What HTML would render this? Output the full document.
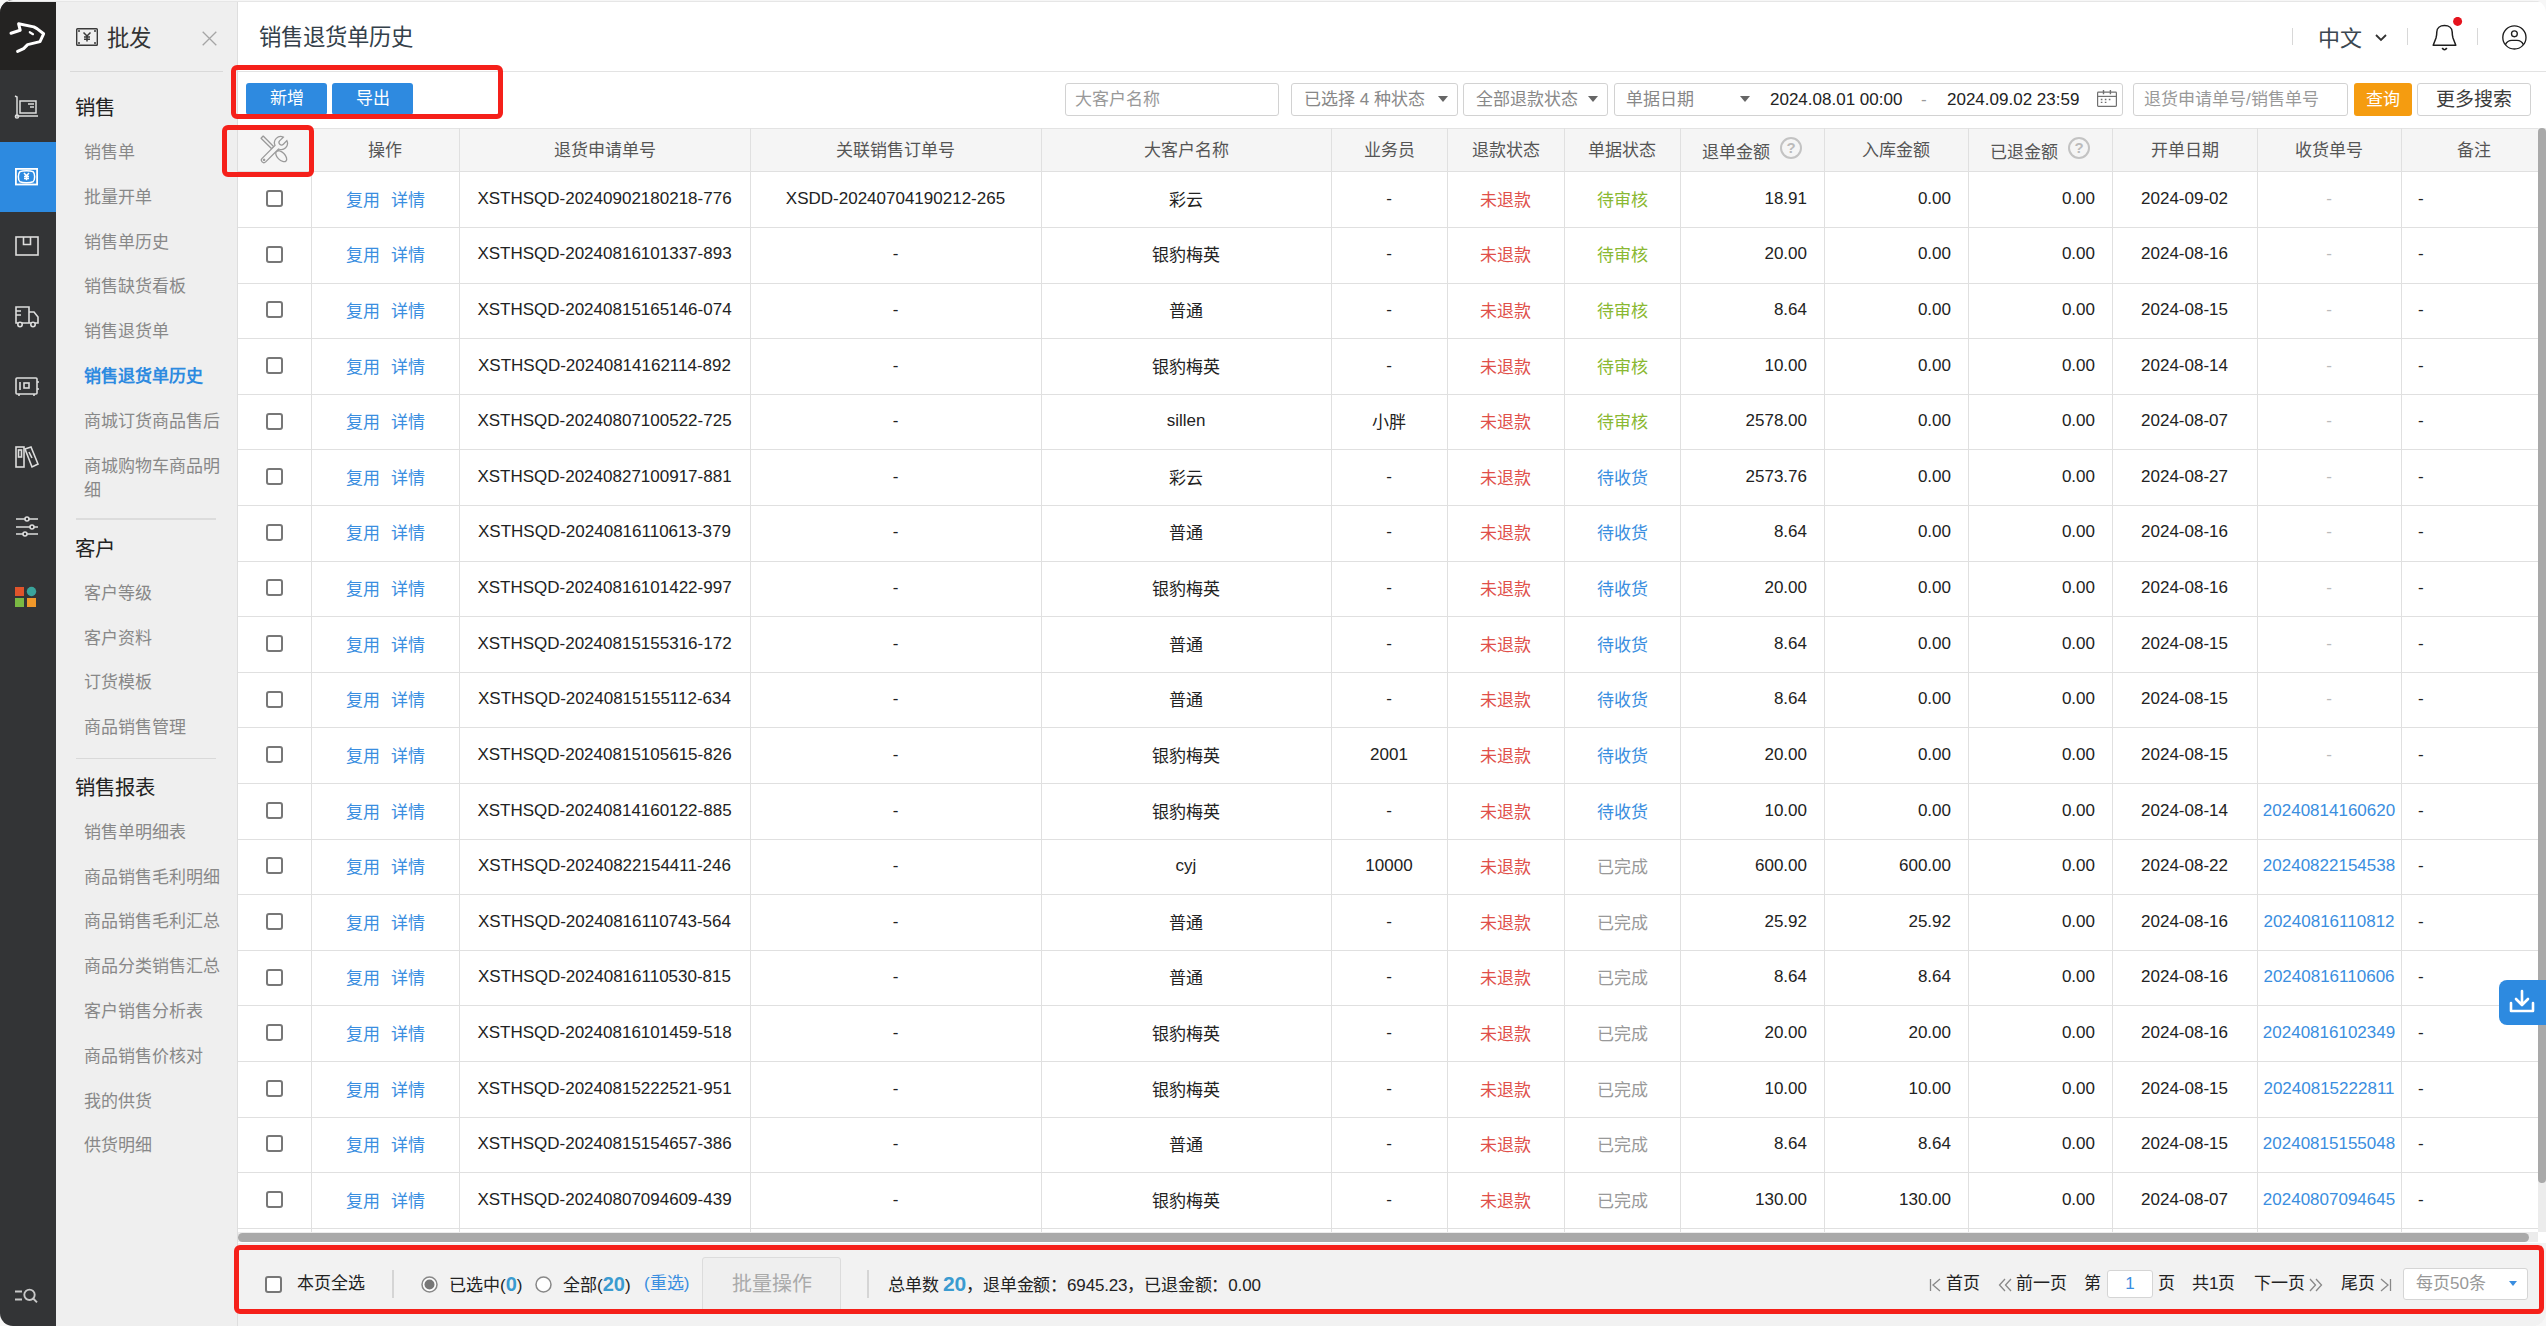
<!DOCTYPE html><html lang="zh-CN"><head><meta charset="utf-8"><style>
*{margin:0;padding:0;box-sizing:border-box}
html,body{width:2546px;height:1326px;overflow:hidden;background:#f7f7f7;font-family:"Liberation Sans",sans-serif}
#win{position:absolute;left:0;top:0;width:2546px;height:1326px;border-radius:13px;overflow:hidden;background:#fff}
#topln{position:absolute;left:0;top:0;width:2546px;height:2px;background:linear-gradient(#f6f6f6 0,#f6f6f6 1px,#e6e6e6 1px)}
#rtln{position:absolute;left:2545px;top:0;width:1px;height:120px;background:#ececec}
.abs{position:absolute}
/* rail */
#rail{position:absolute;left:0;top:0;width:56px;height:1326px;background:#333436}
#logo{position:absolute;left:0;top:0;width:56px;height:70px;background:#242322}
#act{position:absolute;left:0;top:142px;width:56px;height:70px;background:#2d8ae0}
.ri{position:absolute;left:0;width:56px;display:flex;justify-content:flex-start;padding-left:14px}
/* sidebar */
#side{position:absolute;left:56px;top:0;width:181px;height:1326px;background:#efefef;color:#888}
#side .hd{position:absolute;left:20px;top:22px;font-size:22px;color:#333;line-height:30px}
#side .x{position:absolute;left:145.5px;top:30.5px}
#side .div{position:absolute;left:14px;width:153px;height:1px;background:#d9d9d9}
#side .grp{position:absolute;left:19px;font-size:20.4px;color:#222;line-height:26px}
#side .it{position:absolute;left:28px;width:140px;font-size:17px;line-height:24px;color:#888}
#side .it.on{color:#2d8ae0;font-weight:bold}
/* main */
#main{position:absolute;left:237px;top:0;width:2309px;height:1326px;border-left:1px solid #dedede}
#title{position:absolute;left:259px;top:21.5px;font-size:22.4px;color:#34404a;line-height:32px}
#hline{position:absolute;left:238px;top:71px;width:2308px;height:1px;background:#e3e3e3}
.btn{position:absolute;top:83px;height:32px;width:81px;background:#2e8ae0;color:#fff;font-size:17px;line-height:32px;text-align:center;border-radius:3px}
.inp{position:absolute;top:83px;height:33px;border:1px solid #d2d2d2;border-radius:3px;background:#fff;font-size:17px;line-height:31px;color:#999;white-space:nowrap}
.tri{position:absolute;width:0;height:0;border-left:5px solid transparent;border-right:5px solid transparent;border-top:6px solid #666}
/* table */
#tbl{position:absolute;left:0;top:0}
.thead{position:absolute;left:238px;top:128px;width:2300px;height:44px;background:#f5f5f5;border-top:1px solid #e3e3e3}
.vl{position:absolute;top:128px;width:1px;height:1104px;background:#e0e0e0}
.hl{position:absolute;left:238px;width:2300px;height:1px;background:#e0e0e0}
.th{position:absolute;top:128px;height:44px;line-height:46px;text-align:center;font-size:17px;color:#555;white-space:nowrap}
.th.q{line-height:50px}
.th.q .qm{margin-top:8.5px}
.qm{display:inline-block;width:22px;height:22px;border:2px solid #c3c3c3;border-radius:50%;vertical-align:top;margin-top:8px;margin-left:10px;position:relative}
.qm:after{content:"?";position:absolute;left:0;top:0;width:18px;text-align:center;font-size:15px;line-height:18px;color:#bbb;font-weight:bold}
.td{position:absolute;height:55.55px;line-height:57px;text-align:center;font-size:17px;color:#222;white-space:nowrap}
.td.la{line-height:53px}
.td.rt{text-align:right;padding-right:17px}
.td.lt{text-align:left;padding-left:17px}
.td.red{color:#e0504a}
.td.grn{color:#8ab832}
.td.blu{color:#3a8ee0}
.td.gry{color:#999}
.td.dash{color:#bbb}
.lk{color:#3a8ee0}
.l2{margin-left:11px}
.cb{position:absolute;left:266px;width:17px;height:17px;border:2px solid #777;border-radius:3px;background:#fff}
#vsb{position:absolute;left:2538px;top:128px;width:8px;height:1104px;background:#ececec}
#vthumb{position:absolute;left:2538px;top:128px;width:8px;height:1055px;background:#a9a9a9;border-radius:4px}
#hsb{position:absolute;left:238px;top:1232px;width:2300px;height:10px;background:#ececec}
#hthumb{position:absolute;left:238px;top:1233px;width:2291px;height:9px;background:#a9a9a9;border-radius:5px}
/* footer */
#foot{position:absolute;left:238px;top:1243px;width:2308px;height:83px;background:#f2f2f2;font-size:17px;color:#222;white-space:nowrap}
.f{position:absolute;line-height:24px}
.red-box{position:absolute;border:5px solid #f5201a;border-radius:6px}

</style></head><body><div id="win">
<div id="rail">
 <div id="logo">
  <svg class="abs" style="left:0;top:0" width="56" height="70" viewBox="0 0 56 70" fill="none" stroke="#fff" stroke-width="3" stroke-linejoin="round" stroke-linecap="round"><path d="M11 33.2 L20.2 30.2 L18.6 23.8 L33.8 26.9 L37 28.6 L43.6 33.8 L40 41.6 L27.6 44.6 L23.6 48.6 L17.6 51.4"/><path d="M29.8 32.2 L33 34.2" stroke-width="2.2"/></svg>
 </div>
 <div id="act"></div>
 <div class="ri" style="top:95px"><svg style="margin-left:-1px" width="26" height="24" viewBox="0 0 26 24" fill="none" stroke="#ddd" stroke-width="1.5"><path d="M2 1 L4 2 L4 21 L25 21"/><rect x="7" y="6" width="16" height="12"/><path d="M15 9 H21 M17 12 H21"/><circle cx="4" cy="21.5" r="1.6"/></svg></div>
 <div class="ri" style="top:168.3px"><svg style="margin-left:1px" width="24" height="18" viewBox="0 0 24 18" fill="none" stroke="#fff" stroke-width="1.8"><rect x="0.9" y="0.9" width="21.2" height="15.6"/><path d="M5 3.6 C8 2.4 15 2.4 18 3.6 C20.2 5.5 20.2 11.9 18 13.8 C15 15 8 15 5 13.8 C2.8 11.9 2.8 5.5 5 3.6 Z" stroke-width="1.5"/><path d="M9 5 L11.5 7.8 L14 5 M11.5 7.8 V12.2 M9 8.6 H14 M9 10.5 H14" stroke-width="1.5"/></svg></div>
 <div class="ri" style="top:235px"><svg width="26" height="22" viewBox="0 0 26 22" fill="none" stroke="#ddd" stroke-width="1.6"><rect x="2" y="2" width="22" height="18"/><path d="M9.5 2 V9.5 H16.5 V2"/></svg></div>
 <div class="ri" style="top:305px"><svg width="26" height="24" viewBox="0 0 26 24" fill="none" stroke="#ddd" stroke-width="1.6"><path d="M2 2 H15 V18 H2 Z M15 7 H20 L24 12 V18 H15"/><path d="M2 6 H7 M2 10 H7"/><circle cx="6" cy="19.5" r="2.2" fill="#333436"/><circle cx="19" cy="19.5" r="2.2" fill="#333436"/></svg></div>
 <div class="ri" style="top:376px"><svg width="26" height="22" viewBox="0 0 26 22" fill="none" stroke="#ddd" stroke-width="1.6"><rect x="2" y="2" width="21" height="16" rx="1"/><path d="M6 6 V14"/><rect x="10" y="7" width="5" height="5"/><path d="M23 6 H25 M23 13 H25 M5 18 V20 M20 18 V20"/></svg></div>
 <div class="ri" style="top:445px"><svg width="26" height="24" viewBox="0 0 26 24" fill="none" stroke="#ddd" stroke-width="1.6"><rect x="2" y="2" width="8" height="20"/><rect x="4.5" y="5" width="3" height="7"/><path d="M11 4 L17 2 L24 19 L18 22 Z"/><path d="M15 7 L18 13"/></svg></div>
 <div class="ri" style="top:515px"><svg width="26" height="22" viewBox="0 0 26 22" fill="none" stroke="#ddd" stroke-width="1.6"><path d="M2 4 H24 M2 12 H24 M2 19 H24"/><circle cx="13" cy="4" r="2" fill="#333436"/><circle cx="18" cy="12" r="2" fill="#333436"/><circle cx="11" cy="19" r="2" fill="#333436"/></svg></div>
 <div class="ri" style="top:586px"><svg width="24" height="22" viewBox="0 0 24 22"><rect x="1" y="1" width="9" height="9" fill="#e0542b"/><circle cx="17.5" cy="5.5" r="4.7" fill="#3aa49b"/><rect x="1" y="12" width="9" height="9" fill="#7ab943"/><rect x="13" y="12" width="9" height="9" fill="#f0982a"/></svg></div>
 <div class="ri" style="top:1287px"><svg width="26" height="20" viewBox="0 0 26 20" fill="none" stroke="#c8c8c8" stroke-width="1.9"><path d="M1 4.5 H8 M1 12.5 H8"/><circle cx="15.5" cy="7.8" r="5.2"/><path d="M19.2 11.5 L23 15.3"/></svg></div>
</div>
<div id="side">
 <svg class="abs" style="left:20px;top:27.5px" width="22" height="18" viewBox="0 0 22 18" fill="none" stroke="#3a3a3a" stroke-width="1.4"><rect x="0.7" y="0.7" width="20.6" height="16.6" rx="0.8"/><path d="M7.5 4.5 L11 8 L14.5 4.5 M11 8 V13.5 M8 9 H14 M8 11.2 H14" stroke-width="1.5"/><circle cx="3" cy="3" r="1" fill="#3a3a3a" stroke="none"/><circle cx="19" cy="3" r="1" fill="#3a3a3a" stroke="none"/><circle cx="3" cy="15" r="1" fill="#3a3a3a" stroke="none"/><circle cx="19" cy="15" r="1" fill="#3a3a3a" stroke="none"/></svg>
 <div class="hd" style="left:50.5px;top:23.5px;font-size:22.4px">批发</div>
 <svg class="x" width="15" height="15" viewBox="0 0 15 15" stroke="#a5a5a5" stroke-width="1.3"><path d="M0.7 0.7 L14.3 14.3 M14.3 0.7 L0.7 14.3"/></svg>
 <div class="div" style="top:71px"></div>
 <div class="grp" style="top:95px">销售</div>
 <div class="it" style="top:141px">销售单</div>
 <div class="it" style="top:186px">批量开单</div>
 <div class="it" style="top:231px">销售单历史</div>
 <div class="it" style="top:275px">销售缺货看板</div>
 <div class="it" style="top:320px">销售退货单</div>
 <div class="it on" style="top:365px">销售退货单历史</div>
 <div class="it" style="top:410px">商城订货商品售后</div>
 <div class="it" style="top:455px">商城购物车商品明细</div>
 <div class="div" style="top:518px;left:20px;width:140px;height:2px;background:#dcdcdc"></div>
 <div class="grp" style="top:536px">客户</div>
 <div class="it" style="top:582px">客户等级</div>
 <div class="it" style="top:627px">客户资料</div>
 <div class="it" style="top:671px">订货模板</div>
 <div class="it" style="top:716px">商品销售管理</div>
 <div class="div" style="top:758px;left:20px;width:140px"></div>
 <div class="grp" style="top:775px">销售报表</div>
 <div class="it" style="top:821px">销售单明细表</div>
 <div class="it" style="top:866px">商品销售毛利明细</div>
 <div class="it" style="top:910px">商品销售毛利汇总</div>
 <div class="it" style="top:955px">商品分类销售汇总</div>
 <div class="it" style="top:1000px">客户销售分析表</div>
 <div class="it" style="top:1045px">商品销售价核对</div>
 <div class="it" style="top:1090px">我的供货</div>
 <div class="it" style="top:1134px">供货明细</div>
</div>
<div id="main"></div>
<div id="title">销售退货单历史</div>
<div id="hline"></div>
<!-- header right -->
<div class="abs" style="left:2292px;top:28px;width:1px;height:17px;background:#d8d8d8"></div>
<div class="abs" style="left:2318px;top:23.5px;font-size:22px;color:#3b4650;line-height:30px">中文</div>
<svg class="abs" style="left:2375px;top:34px" width="12" height="8" viewBox="0 0 12 8" fill="none" stroke="#333" stroke-width="1.8"><path d="M1 1 L6 6 L11 1"/></svg>
<div class="abs" style="left:2407px;top:28px;width:1px;height:17px;background:#d8d8d8"></div>
<svg class="abs" style="left:2430px;top:17px" width="36" height="36" viewBox="0 0 36 36" fill="none" stroke="#1e1e1e" stroke-width="1.5" stroke-linejoin="round"><path d="M3.2 28.2 H25.8 L23 21 C22.4 19 22.2 17 22.2 15 C22.2 11 19 8.6 14.5 8.6 C10 8.6 6.8 11 6.8 15 C6.8 17 6.6 19 6 21 Z"/><path d="M12.2 31 Q14.5 34.5 16.8 31" stroke-width="1.7"/><circle cx="27.6" cy="4.4" r="4.5" fill="#e5131d" stroke="none"/></svg>
<div class="abs" style="left:2477px;top:28px;width:1px;height:17px;background:#d8d8d8"></div>
<svg class="abs" style="left:2500px;top:23px" width="29" height="29" viewBox="0 0 29 29" fill="none" stroke="#1e1e1e" stroke-width="1.35"><circle cx="14.4" cy="14.4" r="11.6"/><circle cx="14.4" cy="10.8" r="2.9"/><path d="M5.4 21.6 C6.8 18.6 9.2 17.4 11.8 17.4 H17 C19.6 17.4 22 18.6 23.4 21.6"/></svg>
<!-- toolbar -->
<div class="btn" style="left:246px">新增</div>
<div class="btn" style="left:332px">导出</div>
<div class="inp" style="left:1065px;width:214px;padding-left:9px">大客户名称</div>
<div class="inp" style="left:1291px;width:167px;padding-left:12px;color:#888">已选择 4 种状态<i class="tri" style="left:146px;top:12px"></i></div>
<div class="inp" style="left:1463px;width:145px;padding-left:12px;color:#888">全部退款状态<i class="tri" style="left:124px;top:12px"></i></div>
<div class="inp" style="left:1614px;width:509px;padding-left:11px;color:#888">单据日期<i class="tri" style="left:125px;top:12px"></i><span class="abs" style="left:155px;color:#222">2024.08.01 00:00</span><span class="abs" style="left:306px;color:#999">-</span><span class="abs" style="left:332px;color:#222">2024.09.02 23:59</span>
 <svg class="abs" style="left:481px;top:5px" width="22" height="20" viewBox="0 0 22 20" fill="none" stroke="#707070" stroke-width="1.2"><rect x="1.6" y="3.1" width="18.8" height="14.3" rx="0.8"/><path d="M1.6 7.4 H20.4"/><path d="M7.5 1 V5.2 M14.4 1 V5.2" stroke-width="1.4"/><path d="M4.8 10.5 H6.4 M8.8 10.5 H10.4 M12.8 10.5 H14.4 M4.8 13.3 H6.4 M8.8 13.3 H10.4" stroke-width="1.3"/></svg></div>
<div class="inp" style="left:2133px;width:215px;padding-left:10px">退货申请单号/销售单号</div>
<div class="abs" style="left:2354px;top:83px;width:58px;height:33px;background:#f59c10;border-radius:3px;color:#fff;font-size:17px;line-height:33px;text-align:center">查询</div>
<div class="abs" style="left:2417px;top:83px;width:114px;height:33px;border:1px solid #d2d2d2;border-radius:3px;color:#3c3c3c;font-size:19px;line-height:31px;text-align:center">更多搜索</div>

<div id="tbl">
<div class="thead"></div>
<div class="vl" style="left:311px"></div>
<div class="vl" style="left:459px"></div>
<div class="vl" style="left:750px"></div>
<div class="vl" style="left:1041px"></div>
<div class="vl" style="left:1331px"></div>
<div class="vl" style="left:1447px"></div>
<div class="vl" style="left:1564px"></div>
<div class="vl" style="left:1680px"></div>
<div class="vl" style="left:1824px"></div>
<div class="vl" style="left:1968px"></div>
<div class="vl" style="left:2112px"></div>
<div class="vl" style="left:2257px"></div>
<div class="vl" style="left:2401px"></div>
<div class="hl" style="top:171.30px"></div>
<div class="hl" style="top:226.90px"></div>
<div class="hl" style="top:282.50px"></div>
<div class="hl" style="top:338.10px"></div>
<div class="hl" style="top:393.70px"></div>
<div class="hl" style="top:449.30px"></div>
<div class="hl" style="top:504.90px"></div>
<div class="hl" style="top:560.50px"></div>
<div class="hl" style="top:616.10px"></div>
<div class="hl" style="top:671.70px"></div>
<div class="hl" style="top:727.30px"></div>
<div class="hl" style="top:782.90px"></div>
<div class="hl" style="top:838.50px"></div>
<div class="hl" style="top:894.10px"></div>
<div class="hl" style="top:949.70px"></div>
<div class="hl" style="top:1005.30px"></div>
<div class="hl" style="top:1060.90px"></div>
<div class="hl" style="top:1116.50px"></div>
<div class="hl" style="top:1172.10px"></div>
<div class="hl" style="top:1227.70px"></div>
<div class="th" style="left:311px;width:148px">操作</div>
<div class="th" style="left:459px;width:291px">退货申请单号</div>
<div class="th" style="left:750px;width:291px">关联销售订单号</div>
<div class="th" style="left:1041px;width:290px">大客户名称</div>
<div class="th" style="left:1331px;width:116px">业务员</div>
<div class="th" style="left:1447px;width:117px">退款状态</div>
<div class="th" style="left:1564px;width:116px">单据状态</div>
<div class="th q" style="left:1680px;width:144px">退单金额<span class="qm"></span></div>
<div class="th" style="left:1824px;width:144px">入库金额</div>
<div class="th q" style="left:1968px;width:144px">已退金额<span class="qm"></span></div>
<div class="th" style="left:2112px;width:145px">开单日期</div>
<div class="th" style="left:2257px;width:144px">收货单号</div>
<div class="th" style="left:2401px;width:145px">备注</div>
<div class="cb" style="top:190.10px"></div>
<div class="td " style="left:311px;width:148px;top:171.80px"><span class="lk">复用</span><span class="lk l2">详情</span></div>
<div class="td la" style="left:459px;width:291px;top:171.80px">XSTHSQD-20240902180218-776</div>
<div class="td la" style="left:750px;width:291px;top:171.80px">XSDD-20240704190212-265</div>
<div class="td " style="left:1041px;width:290px;top:171.80px">彩云</div>
<div class="td la" style="left:1331px;width:116px;top:171.80px">-</div>
<div class="td red" style="left:1447px;width:117px;top:171.80px">未退款</div>
<div class="td grn" style="left:1564px;width:116px;top:171.80px">待审核</div>
<div class="td rt la" style="left:1680px;width:144px;top:171.80px">18.91</div>
<div class="td rt la" style="left:1824px;width:144px;top:171.80px">0.00</div>
<div class="td rt la" style="left:1968px;width:144px;top:171.80px">0.00</div>
<div class="td la" style="left:2112px;width:145px;top:171.80px">2024-09-02</div>
<div class="td dash la" style="left:2257px;width:144px;top:171.80px">-</div>
<div class="td lt la" style="left:2401px;width:145px;top:171.80px">-</div>
<div class="cb" style="top:245.71px"></div>
<div class="td " style="left:311px;width:148px;top:227.41px"><span class="lk">复用</span><span class="lk l2">详情</span></div>
<div class="td la" style="left:459px;width:291px;top:227.41px">XSTHSQD-20240816101337-893</div>
<div class="td la" style="left:750px;width:291px;top:227.41px">-</div>
<div class="td " style="left:1041px;width:290px;top:227.41px">银豹梅英</div>
<div class="td la" style="left:1331px;width:116px;top:227.41px">-</div>
<div class="td red" style="left:1447px;width:117px;top:227.41px">未退款</div>
<div class="td grn" style="left:1564px;width:116px;top:227.41px">待审核</div>
<div class="td rt la" style="left:1680px;width:144px;top:227.41px">20.00</div>
<div class="td rt la" style="left:1824px;width:144px;top:227.41px">0.00</div>
<div class="td rt la" style="left:1968px;width:144px;top:227.41px">0.00</div>
<div class="td la" style="left:2112px;width:145px;top:227.41px">2024-08-16</div>
<div class="td dash la" style="left:2257px;width:144px;top:227.41px">-</div>
<div class="td lt la" style="left:2401px;width:145px;top:227.41px">-</div>
<div class="cb" style="top:301.32px"></div>
<div class="td " style="left:311px;width:148px;top:283.02px"><span class="lk">复用</span><span class="lk l2">详情</span></div>
<div class="td la" style="left:459px;width:291px;top:283.02px">XSTHSQD-20240815165146-074</div>
<div class="td la" style="left:750px;width:291px;top:283.02px">-</div>
<div class="td " style="left:1041px;width:290px;top:283.02px">普通</div>
<div class="td la" style="left:1331px;width:116px;top:283.02px">-</div>
<div class="td red" style="left:1447px;width:117px;top:283.02px">未退款</div>
<div class="td grn" style="left:1564px;width:116px;top:283.02px">待审核</div>
<div class="td rt la" style="left:1680px;width:144px;top:283.02px">8.64</div>
<div class="td rt la" style="left:1824px;width:144px;top:283.02px">0.00</div>
<div class="td rt la" style="left:1968px;width:144px;top:283.02px">0.00</div>
<div class="td la" style="left:2112px;width:145px;top:283.02px">2024-08-15</div>
<div class="td dash la" style="left:2257px;width:144px;top:283.02px">-</div>
<div class="td lt la" style="left:2401px;width:145px;top:283.02px">-</div>
<div class="cb" style="top:356.93px"></div>
<div class="td " style="left:311px;width:148px;top:338.63px"><span class="lk">复用</span><span class="lk l2">详情</span></div>
<div class="td la" style="left:459px;width:291px;top:338.63px">XSTHSQD-20240814162114-892</div>
<div class="td la" style="left:750px;width:291px;top:338.63px">-</div>
<div class="td " style="left:1041px;width:290px;top:338.63px">银豹梅英</div>
<div class="td la" style="left:1331px;width:116px;top:338.63px">-</div>
<div class="td red" style="left:1447px;width:117px;top:338.63px">未退款</div>
<div class="td grn" style="left:1564px;width:116px;top:338.63px">待审核</div>
<div class="td rt la" style="left:1680px;width:144px;top:338.63px">10.00</div>
<div class="td rt la" style="left:1824px;width:144px;top:338.63px">0.00</div>
<div class="td rt la" style="left:1968px;width:144px;top:338.63px">0.00</div>
<div class="td la" style="left:2112px;width:145px;top:338.63px">2024-08-14</div>
<div class="td dash la" style="left:2257px;width:144px;top:338.63px">-</div>
<div class="td lt la" style="left:2401px;width:145px;top:338.63px">-</div>
<div class="cb" style="top:412.54px"></div>
<div class="td " style="left:311px;width:148px;top:394.24px"><span class="lk">复用</span><span class="lk l2">详情</span></div>
<div class="td la" style="left:459px;width:291px;top:394.24px">XSTHSQD-20240807100522-725</div>
<div class="td la" style="left:750px;width:291px;top:394.24px">-</div>
<div class="td la" style="left:1041px;width:290px;top:394.24px">sillen</div>
<div class="td " style="left:1331px;width:116px;top:394.24px">小胖</div>
<div class="td red" style="left:1447px;width:117px;top:394.24px">未退款</div>
<div class="td grn" style="left:1564px;width:116px;top:394.24px">待审核</div>
<div class="td rt la" style="left:1680px;width:144px;top:394.24px">2578.00</div>
<div class="td rt la" style="left:1824px;width:144px;top:394.24px">0.00</div>
<div class="td rt la" style="left:1968px;width:144px;top:394.24px">0.00</div>
<div class="td la" style="left:2112px;width:145px;top:394.24px">2024-08-07</div>
<div class="td dash la" style="left:2257px;width:144px;top:394.24px">-</div>
<div class="td lt la" style="left:2401px;width:145px;top:394.24px">-</div>
<div class="cb" style="top:468.15px"></div>
<div class="td " style="left:311px;width:148px;top:449.85px"><span class="lk">复用</span><span class="lk l2">详情</span></div>
<div class="td la" style="left:459px;width:291px;top:449.85px">XSTHSQD-20240827100917-881</div>
<div class="td la" style="left:750px;width:291px;top:449.85px">-</div>
<div class="td " style="left:1041px;width:290px;top:449.85px">彩云</div>
<div class="td la" style="left:1331px;width:116px;top:449.85px">-</div>
<div class="td red" style="left:1447px;width:117px;top:449.85px">未退款</div>
<div class="td blu" style="left:1564px;width:116px;top:449.85px">待收货</div>
<div class="td rt la" style="left:1680px;width:144px;top:449.85px">2573.76</div>
<div class="td rt la" style="left:1824px;width:144px;top:449.85px">0.00</div>
<div class="td rt la" style="left:1968px;width:144px;top:449.85px">0.00</div>
<div class="td la" style="left:2112px;width:145px;top:449.85px">2024-08-27</div>
<div class="td dash la" style="left:2257px;width:144px;top:449.85px">-</div>
<div class="td lt la" style="left:2401px;width:145px;top:449.85px">-</div>
<div class="cb" style="top:523.76px"></div>
<div class="td " style="left:311px;width:148px;top:505.46px"><span class="lk">复用</span><span class="lk l2">详情</span></div>
<div class="td la" style="left:459px;width:291px;top:505.46px">XSTHSQD-20240816110613-379</div>
<div class="td la" style="left:750px;width:291px;top:505.46px">-</div>
<div class="td " style="left:1041px;width:290px;top:505.46px">普通</div>
<div class="td la" style="left:1331px;width:116px;top:505.46px">-</div>
<div class="td red" style="left:1447px;width:117px;top:505.46px">未退款</div>
<div class="td blu" style="left:1564px;width:116px;top:505.46px">待收货</div>
<div class="td rt la" style="left:1680px;width:144px;top:505.46px">8.64</div>
<div class="td rt la" style="left:1824px;width:144px;top:505.46px">0.00</div>
<div class="td rt la" style="left:1968px;width:144px;top:505.46px">0.00</div>
<div class="td la" style="left:2112px;width:145px;top:505.46px">2024-08-16</div>
<div class="td dash la" style="left:2257px;width:144px;top:505.46px">-</div>
<div class="td lt la" style="left:2401px;width:145px;top:505.46px">-</div>
<div class="cb" style="top:579.37px"></div>
<div class="td " style="left:311px;width:148px;top:561.07px"><span class="lk">复用</span><span class="lk l2">详情</span></div>
<div class="td la" style="left:459px;width:291px;top:561.07px">XSTHSQD-20240816101422-997</div>
<div class="td la" style="left:750px;width:291px;top:561.07px">-</div>
<div class="td " style="left:1041px;width:290px;top:561.07px">银豹梅英</div>
<div class="td la" style="left:1331px;width:116px;top:561.07px">-</div>
<div class="td red" style="left:1447px;width:117px;top:561.07px">未退款</div>
<div class="td blu" style="left:1564px;width:116px;top:561.07px">待收货</div>
<div class="td rt la" style="left:1680px;width:144px;top:561.07px">20.00</div>
<div class="td rt la" style="left:1824px;width:144px;top:561.07px">0.00</div>
<div class="td rt la" style="left:1968px;width:144px;top:561.07px">0.00</div>
<div class="td la" style="left:2112px;width:145px;top:561.07px">2024-08-16</div>
<div class="td dash la" style="left:2257px;width:144px;top:561.07px">-</div>
<div class="td lt la" style="left:2401px;width:145px;top:561.07px">-</div>
<div class="cb" style="top:634.98px"></div>
<div class="td " style="left:311px;width:148px;top:616.68px"><span class="lk">复用</span><span class="lk l2">详情</span></div>
<div class="td la" style="left:459px;width:291px;top:616.68px">XSTHSQD-20240815155316-172</div>
<div class="td la" style="left:750px;width:291px;top:616.68px">-</div>
<div class="td " style="left:1041px;width:290px;top:616.68px">普通</div>
<div class="td la" style="left:1331px;width:116px;top:616.68px">-</div>
<div class="td red" style="left:1447px;width:117px;top:616.68px">未退款</div>
<div class="td blu" style="left:1564px;width:116px;top:616.68px">待收货</div>
<div class="td rt la" style="left:1680px;width:144px;top:616.68px">8.64</div>
<div class="td rt la" style="left:1824px;width:144px;top:616.68px">0.00</div>
<div class="td rt la" style="left:1968px;width:144px;top:616.68px">0.00</div>
<div class="td la" style="left:2112px;width:145px;top:616.68px">2024-08-15</div>
<div class="td dash la" style="left:2257px;width:144px;top:616.68px">-</div>
<div class="td lt la" style="left:2401px;width:145px;top:616.68px">-</div>
<div class="cb" style="top:690.59px"></div>
<div class="td " style="left:311px;width:148px;top:672.29px"><span class="lk">复用</span><span class="lk l2">详情</span></div>
<div class="td la" style="left:459px;width:291px;top:672.29px">XSTHSQD-20240815155112-634</div>
<div class="td la" style="left:750px;width:291px;top:672.29px">-</div>
<div class="td " style="left:1041px;width:290px;top:672.29px">普通</div>
<div class="td la" style="left:1331px;width:116px;top:672.29px">-</div>
<div class="td red" style="left:1447px;width:117px;top:672.29px">未退款</div>
<div class="td blu" style="left:1564px;width:116px;top:672.29px">待收货</div>
<div class="td rt la" style="left:1680px;width:144px;top:672.29px">8.64</div>
<div class="td rt la" style="left:1824px;width:144px;top:672.29px">0.00</div>
<div class="td rt la" style="left:1968px;width:144px;top:672.29px">0.00</div>
<div class="td la" style="left:2112px;width:145px;top:672.29px">2024-08-15</div>
<div class="td dash la" style="left:2257px;width:144px;top:672.29px">-</div>
<div class="td lt la" style="left:2401px;width:145px;top:672.29px">-</div>
<div class="cb" style="top:746.20px"></div>
<div class="td " style="left:311px;width:148px;top:727.90px"><span class="lk">复用</span><span class="lk l2">详情</span></div>
<div class="td la" style="left:459px;width:291px;top:727.90px">XSTHSQD-20240815105615-826</div>
<div class="td la" style="left:750px;width:291px;top:727.90px">-</div>
<div class="td " style="left:1041px;width:290px;top:727.90px">银豹梅英</div>
<div class="td la" style="left:1331px;width:116px;top:727.90px">2001</div>
<div class="td red" style="left:1447px;width:117px;top:727.90px">未退款</div>
<div class="td blu" style="left:1564px;width:116px;top:727.90px">待收货</div>
<div class="td rt la" style="left:1680px;width:144px;top:727.90px">20.00</div>
<div class="td rt la" style="left:1824px;width:144px;top:727.90px">0.00</div>
<div class="td rt la" style="left:1968px;width:144px;top:727.90px">0.00</div>
<div class="td la" style="left:2112px;width:145px;top:727.90px">2024-08-15</div>
<div class="td dash la" style="left:2257px;width:144px;top:727.90px">-</div>
<div class="td lt la" style="left:2401px;width:145px;top:727.90px">-</div>
<div class="cb" style="top:801.81px"></div>
<div class="td " style="left:311px;width:148px;top:783.51px"><span class="lk">复用</span><span class="lk l2">详情</span></div>
<div class="td la" style="left:459px;width:291px;top:783.51px">XSTHSQD-20240814160122-885</div>
<div class="td la" style="left:750px;width:291px;top:783.51px">-</div>
<div class="td " style="left:1041px;width:290px;top:783.51px">银豹梅英</div>
<div class="td la" style="left:1331px;width:116px;top:783.51px">-</div>
<div class="td red" style="left:1447px;width:117px;top:783.51px">未退款</div>
<div class="td blu" style="left:1564px;width:116px;top:783.51px">待收货</div>
<div class="td rt la" style="left:1680px;width:144px;top:783.51px">10.00</div>
<div class="td rt la" style="left:1824px;width:144px;top:783.51px">0.00</div>
<div class="td rt la" style="left:1968px;width:144px;top:783.51px">0.00</div>
<div class="td la" style="left:2112px;width:145px;top:783.51px">2024-08-14</div>
<div class="td blu la" style="left:2257px;width:144px;top:783.51px">20240814160620</div>
<div class="td lt la" style="left:2401px;width:145px;top:783.51px">-</div>
<div class="cb" style="top:857.42px"></div>
<div class="td " style="left:311px;width:148px;top:839.12px"><span class="lk">复用</span><span class="lk l2">详情</span></div>
<div class="td la" style="left:459px;width:291px;top:839.12px">XSTHSQD-20240822154411-246</div>
<div class="td la" style="left:750px;width:291px;top:839.12px">-</div>
<div class="td la" style="left:1041px;width:290px;top:839.12px">cyj</div>
<div class="td la" style="left:1331px;width:116px;top:839.12px">10000</div>
<div class="td red" style="left:1447px;width:117px;top:839.12px">未退款</div>
<div class="td gry" style="left:1564px;width:116px;top:839.12px">已完成</div>
<div class="td rt la" style="left:1680px;width:144px;top:839.12px">600.00</div>
<div class="td rt la" style="left:1824px;width:144px;top:839.12px">600.00</div>
<div class="td rt la" style="left:1968px;width:144px;top:839.12px">0.00</div>
<div class="td la" style="left:2112px;width:145px;top:839.12px">2024-08-22</div>
<div class="td blu la" style="left:2257px;width:144px;top:839.12px">20240822154538</div>
<div class="td lt la" style="left:2401px;width:145px;top:839.12px">-</div>
<div class="cb" style="top:913.03px"></div>
<div class="td " style="left:311px;width:148px;top:894.73px"><span class="lk">复用</span><span class="lk l2">详情</span></div>
<div class="td la" style="left:459px;width:291px;top:894.73px">XSTHSQD-20240816110743-564</div>
<div class="td la" style="left:750px;width:291px;top:894.73px">-</div>
<div class="td " style="left:1041px;width:290px;top:894.73px">普通</div>
<div class="td la" style="left:1331px;width:116px;top:894.73px">-</div>
<div class="td red" style="left:1447px;width:117px;top:894.73px">未退款</div>
<div class="td gry" style="left:1564px;width:116px;top:894.73px">已完成</div>
<div class="td rt la" style="left:1680px;width:144px;top:894.73px">25.92</div>
<div class="td rt la" style="left:1824px;width:144px;top:894.73px">25.92</div>
<div class="td rt la" style="left:1968px;width:144px;top:894.73px">0.00</div>
<div class="td la" style="left:2112px;width:145px;top:894.73px">2024-08-16</div>
<div class="td blu la" style="left:2257px;width:144px;top:894.73px">20240816110812</div>
<div class="td lt la" style="left:2401px;width:145px;top:894.73px">-</div>
<div class="cb" style="top:968.64px"></div>
<div class="td " style="left:311px;width:148px;top:950.34px"><span class="lk">复用</span><span class="lk l2">详情</span></div>
<div class="td la" style="left:459px;width:291px;top:950.34px">XSTHSQD-20240816110530-815</div>
<div class="td la" style="left:750px;width:291px;top:950.34px">-</div>
<div class="td " style="left:1041px;width:290px;top:950.34px">普通</div>
<div class="td la" style="left:1331px;width:116px;top:950.34px">-</div>
<div class="td red" style="left:1447px;width:117px;top:950.34px">未退款</div>
<div class="td gry" style="left:1564px;width:116px;top:950.34px">已完成</div>
<div class="td rt la" style="left:1680px;width:144px;top:950.34px">8.64</div>
<div class="td rt la" style="left:1824px;width:144px;top:950.34px">8.64</div>
<div class="td rt la" style="left:1968px;width:144px;top:950.34px">0.00</div>
<div class="td la" style="left:2112px;width:145px;top:950.34px">2024-08-16</div>
<div class="td blu la" style="left:2257px;width:144px;top:950.34px">20240816110606</div>
<div class="td lt la" style="left:2401px;width:145px;top:950.34px">-</div>
<div class="cb" style="top:1024.25px"></div>
<div class="td " style="left:311px;width:148px;top:1005.95px"><span class="lk">复用</span><span class="lk l2">详情</span></div>
<div class="td la" style="left:459px;width:291px;top:1005.95px">XSTHSQD-20240816101459-518</div>
<div class="td la" style="left:750px;width:291px;top:1005.95px">-</div>
<div class="td " style="left:1041px;width:290px;top:1005.95px">银豹梅英</div>
<div class="td la" style="left:1331px;width:116px;top:1005.95px">-</div>
<div class="td red" style="left:1447px;width:117px;top:1005.95px">未退款</div>
<div class="td gry" style="left:1564px;width:116px;top:1005.95px">已完成</div>
<div class="td rt la" style="left:1680px;width:144px;top:1005.95px">20.00</div>
<div class="td rt la" style="left:1824px;width:144px;top:1005.95px">20.00</div>
<div class="td rt la" style="left:1968px;width:144px;top:1005.95px">0.00</div>
<div class="td la" style="left:2112px;width:145px;top:1005.95px">2024-08-16</div>
<div class="td blu la" style="left:2257px;width:144px;top:1005.95px">20240816102349</div>
<div class="td lt la" style="left:2401px;width:145px;top:1005.95px">-</div>
<div class="cb" style="top:1079.86px"></div>
<div class="td " style="left:311px;width:148px;top:1061.56px"><span class="lk">复用</span><span class="lk l2">详情</span></div>
<div class="td la" style="left:459px;width:291px;top:1061.56px">XSTHSQD-20240815222521-951</div>
<div class="td la" style="left:750px;width:291px;top:1061.56px">-</div>
<div class="td " style="left:1041px;width:290px;top:1061.56px">银豹梅英</div>
<div class="td la" style="left:1331px;width:116px;top:1061.56px">-</div>
<div class="td red" style="left:1447px;width:117px;top:1061.56px">未退款</div>
<div class="td gry" style="left:1564px;width:116px;top:1061.56px">已完成</div>
<div class="td rt la" style="left:1680px;width:144px;top:1061.56px">10.00</div>
<div class="td rt la" style="left:1824px;width:144px;top:1061.56px">10.00</div>
<div class="td rt la" style="left:1968px;width:144px;top:1061.56px">0.00</div>
<div class="td la" style="left:2112px;width:145px;top:1061.56px">2024-08-15</div>
<div class="td blu la" style="left:2257px;width:144px;top:1061.56px">20240815222811</div>
<div class="td lt la" style="left:2401px;width:145px;top:1061.56px">-</div>
<div class="cb" style="top:1135.47px"></div>
<div class="td " style="left:311px;width:148px;top:1117.17px"><span class="lk">复用</span><span class="lk l2">详情</span></div>
<div class="td la" style="left:459px;width:291px;top:1117.17px">XSTHSQD-20240815154657-386</div>
<div class="td la" style="left:750px;width:291px;top:1117.17px">-</div>
<div class="td " style="left:1041px;width:290px;top:1117.17px">普通</div>
<div class="td la" style="left:1331px;width:116px;top:1117.17px">-</div>
<div class="td red" style="left:1447px;width:117px;top:1117.17px">未退款</div>
<div class="td gry" style="left:1564px;width:116px;top:1117.17px">已完成</div>
<div class="td rt la" style="left:1680px;width:144px;top:1117.17px">8.64</div>
<div class="td rt la" style="left:1824px;width:144px;top:1117.17px">8.64</div>
<div class="td rt la" style="left:1968px;width:144px;top:1117.17px">0.00</div>
<div class="td la" style="left:2112px;width:145px;top:1117.17px">2024-08-15</div>
<div class="td blu la" style="left:2257px;width:144px;top:1117.17px">20240815155048</div>
<div class="td lt la" style="left:2401px;width:145px;top:1117.17px">-</div>
<div class="cb" style="top:1191.08px"></div>
<div class="td " style="left:311px;width:148px;top:1172.78px"><span class="lk">复用</span><span class="lk l2">详情</span></div>
<div class="td la" style="left:459px;width:291px;top:1172.78px">XSTHSQD-20240807094609-439</div>
<div class="td la" style="left:750px;width:291px;top:1172.78px">-</div>
<div class="td " style="left:1041px;width:290px;top:1172.78px">银豹梅英</div>
<div class="td la" style="left:1331px;width:116px;top:1172.78px">-</div>
<div class="td red" style="left:1447px;width:117px;top:1172.78px">未退款</div>
<div class="td gry" style="left:1564px;width:116px;top:1172.78px">已完成</div>
<div class="td rt la" style="left:1680px;width:144px;top:1172.78px">130.00</div>
<div class="td rt la" style="left:1824px;width:144px;top:1172.78px">130.00</div>
<div class="td rt la" style="left:1968px;width:144px;top:1172.78px">0.00</div>
<div class="td la" style="left:2112px;width:145px;top:1172.78px">2024-08-07</div>
<div class="td blu la" style="left:2257px;width:144px;top:1172.78px">20240807094645</div>
<div class="td lt la" style="left:2401px;width:145px;top:1172.78px">-</div>
</div>
<!-- wrench -->
<svg class="abs" style="left:260px;top:135px" width="29" height="29" viewBox="-2 -2 58 58" fill="none" stroke="#9a9a9a" stroke-width="2.6">
 <g transform="rotate(-45 27 27)"><path d="M24 -8 H30 V22 H24 Z" stroke-linejoin="round"/><ellipse cx="27" cy="46" rx="7.5" ry="13.5"/></g>
 <g transform="rotate(45 27 27)"><path d="M22 -3 A12.5 12.5 0 0 0 22 20.5 L22 57 A5 5 0 0 0 32 57 L32 20.5 A12.5 12.5 0 0 0 32 -3 L32 7 A5 5 0 0 1 22 7 Z" fill="#f5f5f5"/><circle cx="27" cy="56.5" r="1.3"/></g>
</svg>
<div id="vsb"></div><div id="vthumb"></div>
<div id="hsb"></div><div id="hthumb"></div>
<div id="foot">
 <div class="abs" style="left:27px;top:33px;width:17px;height:17px;border:2px solid #777;border-radius:3px;background:#fff"></div>
 <div class="f" style="left:59px;top:29px">本页全选</div>
 <div class="abs" style="left:154px;top:27px;width:1.5px;height:28px;background:#d5d5d5"></div>
 <svg class="abs" style="left:183px;top:33px" width="17" height="17" viewBox="0 0 17 17"><circle cx="8.5" cy="8.5" r="7.5" fill="#fff" stroke="#888" stroke-width="1.5"/><circle cx="8.5" cy="8.5" r="5" fill="#777"/></svg>
 <div class="f" style="left:211px;top:29px">已选中(<b style="color:#3a9bd0;font-size:20px">0</b>)</div>
 <svg class="abs" style="left:297px;top:33px" width="17" height="17" viewBox="0 0 17 17"><circle cx="8.5" cy="8.5" r="7.5" fill="#fff" stroke="#888" stroke-width="1.5"/></svg>
 <div class="f" style="left:325px;top:29px">全部(<b style="color:#3a9bd0;font-size:20px">20</b>)</div>
 <div class="f" style="left:406px;top:29px;color:#3a8ee0">(重选)</div>
 <div class="abs" style="left:464px;top:14px;width:139px;height:56px;background:#efefef;border:1px solid #dcdcdc;border-radius:3px;color:#aaa;font-size:20px;line-height:52px;text-align:center">批量操作</div>
 <div class="abs" style="left:629px;top:27px;width:1.5px;height:28px;background:#d5d5d5"></div>
 <div class="f" style="left:650px;top:29px;letter-spacing:-0.17px">总单数 <b style="color:#3a9bd0;font-size:21px">20</b>，退单金额：6945.23，已退金额：0.00</div>
 <!-- pagination -->
 <svg class="abs" style="left:1691px;top:35px" width="13" height="14" viewBox="0 0 13 14" fill="none" stroke="#888" stroke-width="1.3"><path d="M1.5 1 V13 M11 1 L4 7 L11 13"/></svg>
 <div class="f" style="left:1708px;top:29px">首页</div>
 <svg class="abs" style="left:1759.5px;top:35px" width="14" height="14" viewBox="0 0 14 14" fill="none" stroke="#888" stroke-width="1.3"><path d="M7 1 L1.5 7 L7 13 M13 1 L7.5 7 L13 13"/></svg>
 <div class="f" style="left:1778px;top:29px">前一页</div>
 <div class="f" style="left:1846px;top:29px">第</div>
 <div class="abs" style="left:1869px;top:27px;width:46px;height:28px;background:#fff;border:1px solid #d5d5d5;border-radius:3px;color:#3a8ee0;text-align:center;line-height:26px">1</div>
 <div class="f" style="left:1920px;top:29px">页</div>
 <div class="f" style="left:1954px;top:29px">共1页</div>
 <div class="f" style="left:2016px;top:29px">下一页</div>
 <svg class="abs" style="left:2070.5px;top:35px" width="14" height="14" viewBox="0 0 14 14" fill="none" stroke="#888" stroke-width="1.3"><path d="M1 1 L6.5 7 L1 13 M7 1 L12.5 7 L7 13"/></svg>
 <div class="f" style="left:2103px;top:29px">尾页</div>
 <svg class="abs" style="left:2141px;top:35px" width="13" height="14" viewBox="0 0 13 14" fill="none" stroke="#888" stroke-width="1.3"><path d="M2 1 L9 7 L2 13 M11.5 1 V13"/></svg>
 <div class="abs" style="left:2165px;top:25px;width:125px;height:32px;background:#fff;border:1px solid #d5d5d5;border-radius:3px;color:#999;line-height:30px;padding-left:12px">每页50条<i class="tri" style="left:105px;top:12px;border-top-color:#3a8ee0;border-left-width:4px;border-right-width:4px;border-top-width:5px"></i></div>
</div>
<!-- download float -->
<div class="abs" style="left:2499px;top:980px;width:47px;height:45px;background:#2d8ae0;border-radius:8px 0 0 8px"></div>
<svg class="abs" style="left:2508px;top:989px" width="28" height="26" viewBox="0 0 28 26" fill="none" stroke="#fff" stroke-width="2.6" stroke-linecap="round" stroke-linejoin="round"><path d="M14 2 V15 M8 10 L14 16 L20 10 M3 14 V22 H25 V14"/></svg>
<!-- red annotation boxes -->
<div class="red-box" style="left:231px;top:65px;width:272px;height:54px"></div>
<div class="red-box" style="left:222px;top:125px;width:92px;height:52px"></div>
<div class="red-box" style="left:234px;top:1245px;width:2310px;height:68.5px"></div>

<div id="topln"></div>

</div></body></html>
